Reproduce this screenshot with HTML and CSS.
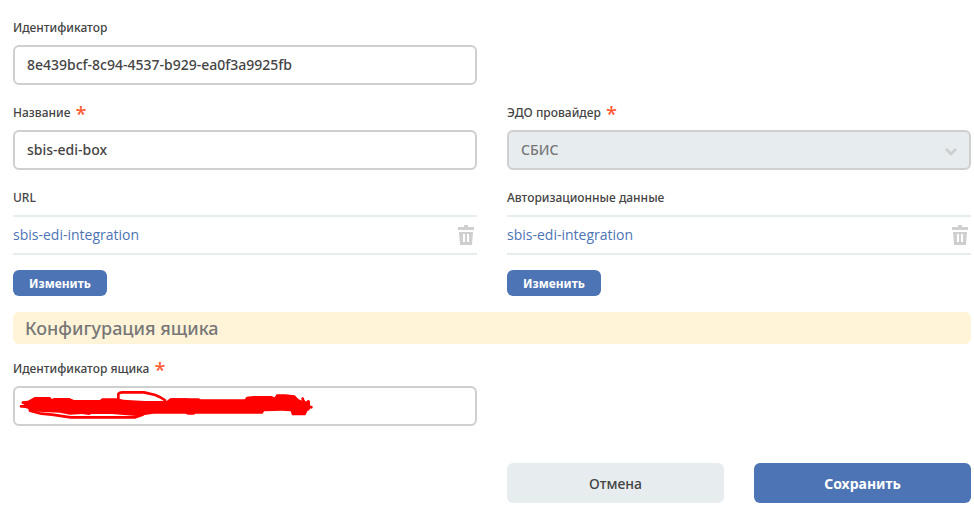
FILE: index.html
```html
<!DOCTYPE html>
<html lang="ru">
<head>
<meta charset="utf-8">
<title>Конфигурация ящика</title>
<link rel="stylesheet" href="styles.css">
</head>
<body>
<form class="form">
  <div class="row">
    <div class="field">
      <label class="label" for="ident">Идентификатор</label>
      <input class="control" id="ident" type="text" value="8e439bcf-8c94-4537-b929-ea0f3a9925fb">
    </div>
  </div>
  <div class="row">
    <div class="field">
      <label class="label" for="name">Название <span class="req">*</span></label>
      <input class="control" id="name" type="text" value="sbis-edi-box">
    </div>
    <div class="field">
      <label class="label" for="provider">ЭДО провайдер <span class="req">*</span></label>
      <div class="control-wrap">
        <select class="control" id="provider" disabled><option>СБИС</option></select>
        <svg class="chevron" width="14" height="10" viewBox="0 0 14 10"><path d="M2 2l5 5 5-5"/></svg>
      </div>
    </div>
  </div>
  <div class="row">
    <div class="field">
      <span class="label">URL</span>
      <div class="item">
        <a class="link" href="#">sbis-edi-integration</a>
        <button class="trash" type="button" aria-label="Удалить"><svg width="16" height="20" viewBox="0 0 16 20"><path fill-rule="evenodd" d="M0 2h6V0h4v2h6v3H0zM1 7h14l-1 13H2zM5 9v8h2V9zM9 9v8h2V9z"/></svg></button>
      </div>
      <button class="edit" type="button">Изменить</button>
    </div>
    <div class="field">
      <span class="label">Авторизационные данные</span>
      <div class="item">
        <a class="link" href="#">sbis-edi-integration</a>
        <button class="trash" type="button" aria-label="Удалить"><svg width="16" height="20" viewBox="0 0 16 20"><path fill-rule="evenodd" d="M0 2h6V0h4v2h6v3H0zM1 7h14l-1 13H2zM5 9v8h2V9zM9 9v8h2V9z"/></svg></button>
      </div>
      <button class="edit" type="button">Изменить</button>
    </div>
  </div>
  <h2 class="section">Конфигурация ящика</h2>
  <div class="row">
    <div class="field">
      <label class="label" for="box">Идентификатор ящика <span class="req">*</span></label>
      <div class="control-wrap">
        <input class="control" id="box" type="text">
        <svg class="scribble" width="320" height="40" viewBox="39 18 960 120">
          <path class="ink" d="M66 64L84 62L104 51H150L156 57L162 54H208L222 60H300L306 55H352L370 59L434 63H500L510 55H596L602 58H734L740 50L760 48H814L824 52L830 43H856L884 46L896 58L906 62L908 52L916 64H930V78L938 80L924 90L916 106H876L872 94L846 92L792 94L788 101H586L582 104H564L556 101H498L460 101L430 106L408 108L336 102L274 102L268 105L246 102L210 104L180 98L130 96L88 94L84 86L68 82L78 77L64 70Z"/>
          <path class="line" d="M90 92L124 101L156 104L212 112H406L428 104M355 56V42Q357 37 367 37H432L466 45Q484 52 495 61M507 65L514 59H560M908 56L912 84M925 64V88M63 79H84M918 76L934 82"/>
        </svg>
      </div>
    </div>
  </div>
  <div class="row actions">
    <div class="buttons">
      <button class="btn" type="button">Отмена</button>
      <button class="btn btn-primary" type="submit">Сохранить</button>
    </div>
  </div>
</form>
</body>
</html>
```

FILE: styles.css
```css
* {
  box-sizing: border-box;
}

body {
  margin: 0;
  background: #fff;
  color: #444;
  font-family: "Noto Sans", "Open Sans", sans-serif;
  font-size: 14px;
}

button,
input,
select {
  margin: 0;
  font: inherit;
}

.form {
  padding: 18px 3px 13px 13px;
}

.row {
  display: grid;
  grid-template-columns: 1fr 1fr;
  column-gap: 30px;
  margin-bottom: 18px;
}

.field {
  display: flex;
  flex-direction: column;
  min-width: 0;
}

.label {
  height: 20px;
  margin-bottom: 7px;
  font-size: 12px;
  font-weight: 500;
  line-height: 20px;
  white-space: nowrap;
}

.req {
  margin-left: 2px;
  color: #ff5c35;
  font-size: 20px;
  font-weight: 500;
  vertical-align: -4px;
  line-height: 1;
}

.control {
  display: block;
  width: 100%;
  height: 40px;
  padding: 0 12px 2px;
  border: 2px solid #cfcfcf;
  border-radius: 6px;
  background: #fff;
  color: #444;
  font-weight: 500;
  appearance: none;
}

.control:disabled {
  background: #e7edef;
  color: #777;
  opacity: 1;
}

.control-wrap {
  position: relative;
}

.chevron {
  position: absolute;
  top: 17px;
  right: 13px;
  fill: none;
  stroke: #cfcfcf;
  stroke-width: 3;
}

.scribble {
  position: absolute;
  top: 0;
  left: 0;
  pointer-events: none;
}

.ink {
  fill: #f00;
}

.line {
  fill: none;
  stroke: #f00;
  stroke-width: 8;
  stroke-linecap: round;
  stroke-linejoin: round;
}

.item {
  display: flex;
  align-items: center;
  justify-content: space-between;
  height: 40px;
  padding-right: 3px;
  border-top: 2px solid #e7edef;
  border-bottom: 2px solid #e7edef;
}

.link {
  padding-bottom: 2px;
  color: #4d74b5;
  font-family: "Open Sans", "Noto Sans", sans-serif;
  text-decoration: none;
}

.trash {
  display: flex;
  padding: 0;
  border: 0;
  background: none;
  fill: #cfcfcf;
}

.edit {
  align-self: flex-start;
  height: 26px;
  margin-top: 15px;
  padding: 0 16px;
  border: 0;
  border-radius: 6px;
  background: #4d74b5;
  color: #fff;
  font-size: 12px;
  font-weight: 700;
}

.section {
  margin: -2px 0 15px;
  padding: 0 12px;
  border-radius: 6px;
  background: #fff4d8;
  color: #777;
  font-size: 18px;
  font-weight: 500;
  line-height: 32px;
}

.actions {
  margin: 37px 0 0;
}

.buttons {
  display: grid;
  grid-column: 2;
  grid-template-columns: 1fr 1fr;
  column-gap: 30px;
}

.btn {
  height: 40px;
  border: 0;
  border-radius: 6px;
  background: #e7edef;
  color: #444;
  font-weight: 500;
}

.btn-primary {
  background: #4d74b5;
  color: #fff;
  font-weight: 700;
}
```
